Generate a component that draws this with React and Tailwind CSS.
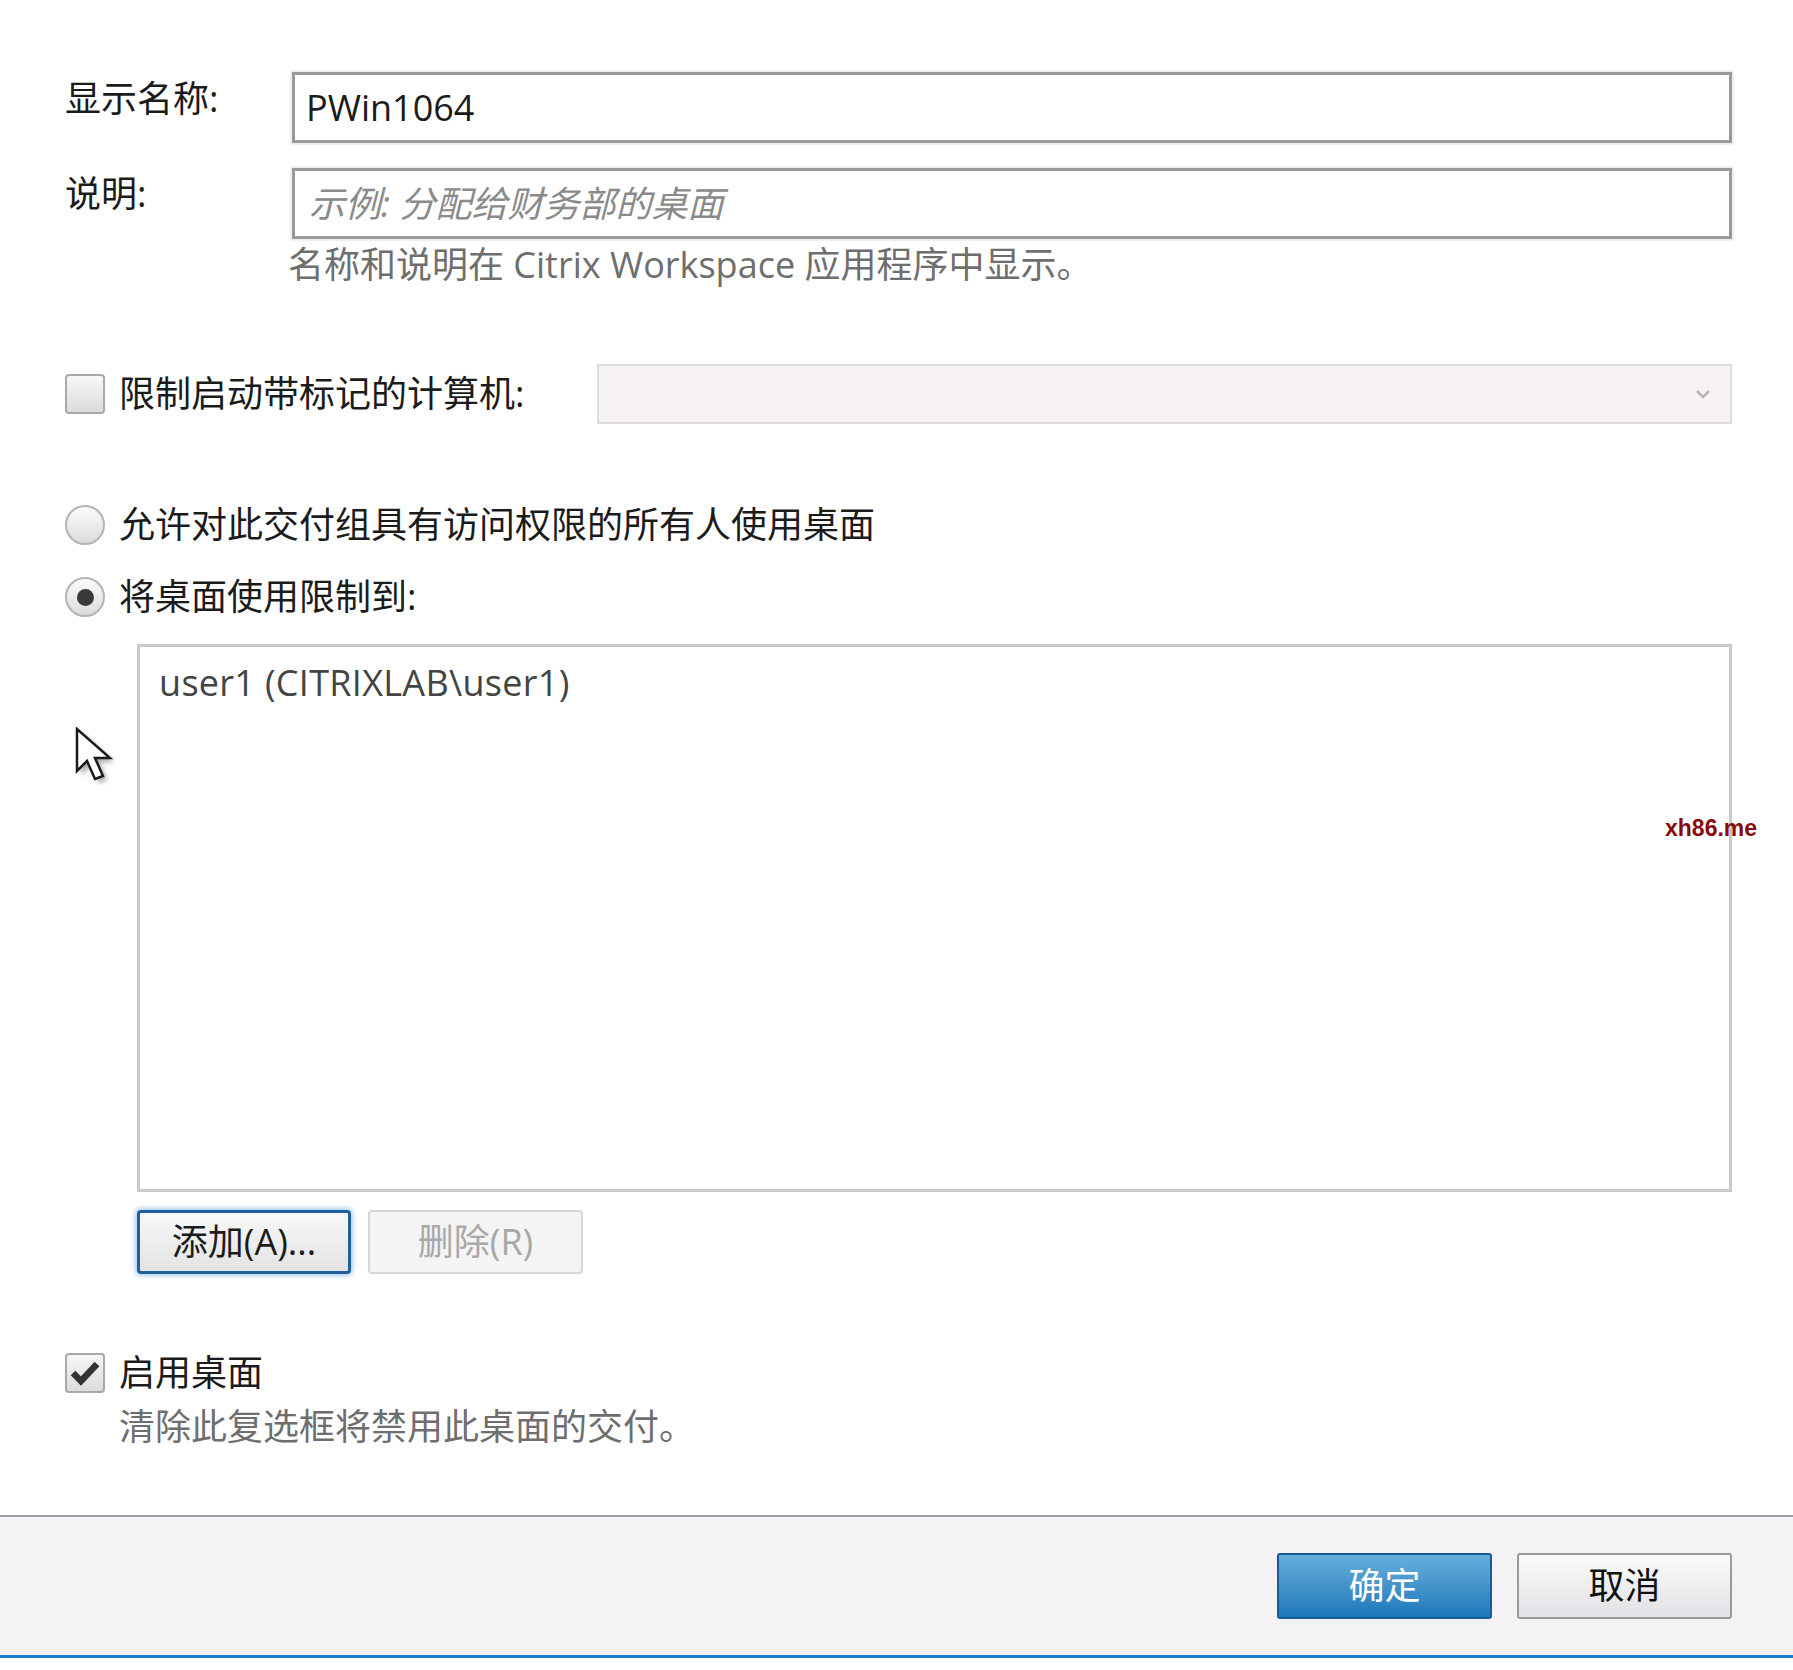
import React from 'react'

function Checkbox({ checked }) {
  return (
    <div className="w-[40px] h-[40px] shrink-0 rounded-[4px] border-2 border-[#a9a9a9] bg-gradient-to-b from-[#f7f7f7] to-[#dcdcdc] flex items-center justify-center">
      {checked && (
        <svg width="30" height="26" viewBox="0 0 30 26">
          <path d="M3 13 L11 21 L27 4" fill="none" stroke="#333" strokeWidth="6.5" strokeLinejoin="miter" />
        </svg>
      )}
    </div>
  )
}

function Radio({ checked }) {
  return (
    <div className="w-[40px] h-[40px] shrink-0 rounded-full border-2 border-[#b4b4b4] bg-gradient-to-b from-[#fbfbfb] to-[#dcdcdc] flex items-center justify-center">
      {checked && <div className="w-[17px] h-[17px] rounded-full bg-[#3a3a3a]" />}
    </div>
  )
}

export default function App() {
  return (
    <div className="relative w-full h-[1670px] bg-white overflow-hidden text-[36px] leading-[44px] text-[#1b1b1b] font-['Open_Sans','Noto_Sans_CJK_SC',sans-serif]">
      {/* Form body */}
      <div className="h-[1515px] pl-[65px] pr-[61px] pt-[72px]">
        <div className="flex">
          <div className="w-[227px] shrink-0 pt-[5px]">显示名称:</div>
          <div className="flex-1 h-[71px] border-[3px] border-[#999] shadow-[0_0_0_2px_#f0f0f0] bg-white pl-[11px] flex items-center">
            PWin1064
          </div>
        </div>

        <div className="flex mt-[25px]">
          <div className="w-[227px] shrink-0 pt-[4px]">说明:</div>
          <div className="flex-1 h-[71px] border-[3px] border-[#999] shadow-[0_0_0_2px_#f0f0f0] bg-white pl-[14px] flex items-center italic text-[#8a8a8a]">
            示例: 分配给财务部的桌面
          </div>
        </div>
        <div className="ml-[223px] mt-[4px] text-[#6e6e6e]">名称和说明在 Citrix Workspace 应用程序中显示。</div>

        <div className="flex items-center mt-[77px]">
          <Checkbox />
          <div className="ml-[14px]">限制启动带标记的计算机:</div>
          <div className="ml-auto w-[1135px] h-[60px] border-2 border-[#dcdcdc] bg-[#f6f2f6] flex items-center justify-end pr-[20px]">
            <svg width="14" height="10" viewBox="0 0 14 10">
              <path d="M1 2 L7 8 L13 2" fill="none" stroke="#b8b8b8" strokeWidth="2.5" />
            </svg>
          </div>
        </div>

        <div className="flex items-center mt-[79px]">
          <Radio />
          <div className="ml-[14px]">允许对此交付组具有访问权限的所有人使用桌面</div>
        </div>
        <div className="flex items-center mt-[28px]">
          <Radio checked />
          <div className="ml-[14px]">将桌面使用限制到:</div>
        </div>

        <div className="ml-[72px] mt-[25px] h-[548px] border-[3px] border-[#c9c9c9] bg-white pl-[19px] pt-[14px] text-[#444] tracking-[0.3px]">
          user1 (CITRIXLAB\user1)
        </div>

        <div className="ml-[72px] mt-[18px] flex gap-[17px]">
          <button className="w-[214px] h-[64px] rounded-[4px] border-[3px] border-[#1f5f9e] shadow-[0_0_5px_2px_#a9cdea] bg-gradient-to-b from-[#f8f8f8] to-[#e3e3e3] text-[#1b1b1b] flex items-center justify-center">
            添加(A)...
          </button>
          <button className="w-[215px] h-[64px] rounded-[4px] border-2 border-[#d6d6d6] bg-[#f4f4f4] text-[#a8a8a8] flex items-center justify-center">
            删除(R)
          </button>
        </div>

        <div className="flex items-center mt-[77px]">
          <Checkbox checked />
          <div className="ml-[14px]">启用桌面</div>
        </div>
        <div className="ml-[54px] mt-[10px] text-[#6e6e6e]">清除此复选框将禁用此桌面的交付。</div>
      </div>

      {/* Footer */}
      <div className="h-[143px] border-t-2 border-[#9da0a8] border-b-[3px] border-b-[#1a7ad4] bg-[#f5f2f5] flex items-center justify-end gap-[25px] pr-[61px]">
        <button className="w-[215px] h-[66px] rounded-[3px] border-2 border-[#135d9a] bg-gradient-to-b from-[#66b0dc] to-[#1a78ba] text-white flex items-center justify-center">
          确定
        </button>
        <button className="w-[215px] h-[66px] rounded-[3px] border-2 border-[#9a9a9a] bg-gradient-to-b from-[#fbfbfb] to-[#e2e2e6] text-[#111] flex items-center justify-center">
          取消
        </button>
      </div>

      {/* Mouse pointer */}
      <svg className="absolute left-[75px] top-[727px]" width="50" height="72" viewBox="0 0 50 72">
        <defs>
          <filter id="sh" x="-50%" y="-50%" width="200%" height="200%">
            <feGaussianBlur stdDeviation="2.5" />
          </filter>
        </defs>
        <path d="M6 6 L6 48 L16 38 L24 56 L32 53 L24 35 L39 35 Z" fill="#000" opacity="0.35" filter="url(#sh)" />
        <path d="M2 2 L2 44 L12 34 L20 52 L28 49 L20 31 L35 31 Z" fill="#fff" stroke="#1a1a1a" strokeWidth="2.5" strokeLinejoin="miter" />
      </svg>

      {/* Watermark */}
      <div className="absolute left-[1665px] top-[814px] text-[23px] leading-[28px] font-bold text-[#8a0a0a] font-['Liberation_Sans',sans-serif]">
        xh86.me
      </div>
    </div>
  )
}
